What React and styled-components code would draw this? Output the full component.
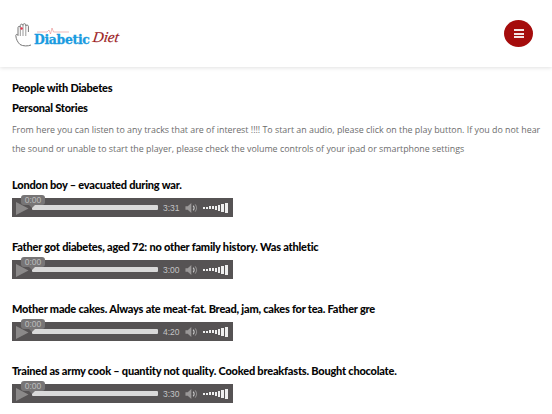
import React from 'react'
import styled, { createGlobalStyle } from 'styled-components';

const GlobalStyle = createGlobalStyle`
    html, body {
        margin: 0;
        padding: 0;
        background: #fff;
        overflow: hidden;
    }
`;

const Page = styled.div`
    width: 552px;
    height: 414px;
    overflow: hidden;
    font-family: Lato, "Liberation Sans", sans-serif;
`;

const Header = styled.header`
    height: 67px;
    box-sizing: border-box;
    padding: 0 19px 0 15px;
    display: flex;
    align-items: center;
    justify-content: space-between;
    box-shadow: 0 1px 4px rgba(0, 0, 0, 0.12);
`;

const Logo = styled.div`
    display: flex;
    align-items: center;
    height: 28px;
    margin-top: 2px;
`;

const LogoHand = styled.svg`
    flex: none;
    margin-right: -1px;
`;

const LogoBlue = styled.span`
    position: relative;
    margin: 9px 0 0 0;
    font-family: "DejaVu Serif", serif;
    font-weight: 700;
    font-size: 12.4px;
    letter-spacing: -0.3px;
    -webkit-text-stroke: 0.3px #1a9be0;
    color: #1a9be0;
`;

const LogoPulse = styled.svg`
    position: absolute;
    left: 3px;
    top: -5px;
`;

const LogoRed = styled.span`
    margin: 5px 0 0 3px;
    font-family: "Liberation Serif", serif;
    font-style: italic;
    font-size: 15px;
    transform: skewX(-8deg);
    -webkit-text-stroke: 0.2px #9c1c1f;
    color: #9c1c1f;
`;

const MenuButton = styled.button`
    width: 29px;
    height: 27px;
    padding: 0;
    border: 0;
    border-radius: 50%;
    background: #a50c0c;
    display: flex;
    flex-direction: column;
    align-items: center;
    justify-content: center;
    gap: 1.5px;
`;

const MenuLine = styled.span`
    width: 10px;
    height: 2px;
    background: #f4e4e4;
`;

const Content = styled.main`
    padding: 14px 0 0 12px;
`;

const Heading = styled.h2`
    margin: 0 0 6px;
    font-size: 11px;
    line-height: 14px;
    letter-spacing: -0.22px;
    font-weight: 900;
    color: #050505;
`;

const Intro = styled.p`
    width: 536px;
    margin: 6px 0 19px;
    font-family: "Open Sans", sans-serif;
    font-size: 8.87px;
    line-height: 19px;
    color: #6d6d6d;
`;

const Track = styled.section`
    height: 62px;
`;

const TrackTitle = styled.h3`
    margin: 0 0 6px;
    font-size: 11px;
    line-height: 14px;
    letter-spacing: -0.22px;
    font-weight: 900;
    white-space: nowrap;
    color: #050505;
`;

const Player = styled.div`
    position: relative;
    width: 221px;
    height: 19px;
    box-sizing: border-box;
    padding: 0 5px 0 4px;
    display: flex;
    align-items: center;
    background: #565354;
`;

const PlayIcon = styled.svg`
    flex: none;
    margin-top: 1px;
`;

const Rail = styled.div`
    flex: none;
    width: 126px;
    height: 5px;
    margin-left: 3px;
    border-radius: 1px;
    background: #d9d9d9;
`;

const Time = styled.span`
    flex: none;
    width: 22px;
    margin-left: 5px;
    font-family: "Liberation Sans", sans-serif;
    font-size: 8.5px;
    color: #c4c4c4;
`;

const Tooltip = styled.div`
    position: absolute;
    left: 9px;
    top: -3px;
    width: 24px;
    height: 10px;
    border-radius: 3px;
    background: #777576;
    font-family: "Liberation Sans", sans-serif;
    font-size: 8.5px;
    line-height: 10px;
    text-align: center;
    color: #bdbdbd;

    &::after {
        content: "";
        position: absolute;
        left: 8px;
        top: 10px;
        border: 3px solid transparent;
        border-bottom: 0;
        border-top-color: #777576;
    }
`;

const Volume = styled.div`
    flex: none;
    margin-left: 4px;
    display: flex;
    align-items: center;
    gap: 1.2px;
    height: 12px;
`;

const VolumeBar = styled.span`
    width: ${({ $width }) => $width}px;
    height: ${({ $height }) => $height}px;
    background: #eee;
`;

const tracks = [
    { title: 'London boy – evacuated during war.', time: '3:31' },
    { title: 'Father got diabetes, aged 72: no other family history. Was athletic', time: '3:00' },
    { title: 'Mother made cakes. Always ate meat-fat. Bread, jam, cakes for tea. Father gre', time: '4:20' },
    { title: 'Trained as army cook – quantity not quality. Cooked breakfasts. Bought chocolate.', time: '3:30' },
];

const volumeBars = [
    [1.7, 2],
    [1.7, 2],
    [1.7, 3],
    [1.7, 3],
    [2, 4],
    [2, 6],
    [2.5, 8],
    [3, 10],
];

const AudioPlayer = ({ time }) => (
    <Player>
        <PlayIcon width="13" height="13" viewBox="0 0 13 13">
            <path d="M0 0L12.5 6.5L0 13Z" fill="#8b8989" />
        </PlayIcon>
        <Rail />
        <Time>{time}</Time>
        <svg width="16" height="12" viewBox="0 0 16 12" fill="none">
            <path d="M0.5 4H3L7 0.5V11.5L3 8H0.5Z" fill="#9a9898" />
            <path d="M9 3.5C10.5 4.8 10.5 7.2 9 8.5" stroke="#cfcfcf" strokeWidth="1.2" />
            <path d="M11 2C13.5 4 13.5 8 11 10" stroke="#8d8b8b" strokeWidth="1.2" />
        </svg>
        <Volume>
            {volumeBars.map(([width, height], i) => (
                <VolumeBar key={i} $width={width} $height={height} />
            ))}
        </Volume>
        <Tooltip>0:00</Tooltip>
    </Player>
);

const App = () => {
    return (
        <Page>
            <GlobalStyle />
            <Header>
                <Logo>
                    <LogoHand width="20" height="24" viewBox="0 0 20 24" fill="none" stroke="#777" strokeWidth="1">
                        <path d="M5 21.5C3 19.5 1 16.5 0.8 12.5C1 11 2.6 11 3 12.5V4.5C3 3 5.2 3 5.3 4.5V2.5C5.4 0.7 7.8 0.7 8 2.5V1.8C8.2 0.3 10.6 0.3 10.8 1.8V3C11 1.7 13.2 1.7 13.4 3.2V9" />
                        <path d="M5 21.5C8 23.3 13 23.3 16 22" />
                        <path d="M5.3 4.5V13M8 2.5V13M10.8 3V13" stroke="#999" />
                        <circle cx="6.6" cy="5.5" r="1.2" fill="#e8324a" stroke="none" />
                    </LogoHand>
                    <LogoBlue>
                        <LogoPulse width="48" height="8" viewBox="0 0 48 8" fill="none" stroke="#e58a8a" strokeWidth="0.6">
                            <path d="M0 5H10L12 3L13.5 7L15 1L16.5 5H32" />
                        </LogoPulse>
                        Diabetic
                    </LogoBlue>
                    <LogoRed>Diet</LogoRed>
                </Logo>
                <MenuButton aria-label="Menu">
                    <MenuLine />
                    <MenuLine />
                    <MenuLine />
                </MenuButton>
            </Header>
            <Content>
                <Heading>People with Diabetes</Heading>
                <Heading>Personal Stories</Heading>
                <Intro>
                    From here you can listen to any tracks that are of interest !!!! To start an audio, please click on the play button. If you do not hear the sound or unable to start the player, please check the volume controls of your ipad or smartphone settings
                </Intro>
                {tracks.map((track) => (
                    <Track key={track.title}>
                        <TrackTitle>{track.title}</TrackTitle>
                        <AudioPlayer time={track.time} />
                    </Track>
                ))}
            </Content>
        </Page>
    )
}

export default App
